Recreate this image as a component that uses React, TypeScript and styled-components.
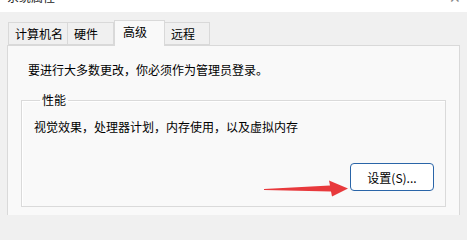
import React from "react";
import styled, { createGlobalStyle } from "styled-components";

const GlobalStyle = createGlobalStyle`
  html, body {
    margin: 0;
    padding: 0;
    background: #f0f0f0;
    font-family: "Noto Sans CJK SC", "Noto Sans", sans-serif;
    font-size: 12px;
    color: #000000;
  }
`;

const Window = styled.div`
  width: 467px;
  height: 215px;
  overflow: hidden;
  background: #f0f0f0;
`;

const TitleBar = styled.div`
  height: 12px;
  background: #ffffff;
  overflow: hidden;
  display: flex;
  justify-content: space-between;
  padding: 0 6px 0 7px;
`;

const TitleText = styled.span`
  font-size: 12px;
  line-height: 16px;
  margin-top: -11px;
  color: #222;
`;

const CloseGlyph = styled.span`
  font-size: 14px;
  line-height: 16px;
  margin-top: -11px;
  color: #888;
`;

const Body = styled.div`
  padding: 0 7px;
`;

const TabRow = styled.div`
  display: flex;
  align-items: flex-end;
  height: 25px;
  margin-top: 8px;
  padding-left: 1px;
`;

const Tab = styled.div<{ $width: number; $active?: boolean }>`
  box-sizing: border-box;
  width: ${({ $width }) => $width}px;
  height: ${({ $active }) => ($active ? 26 : 23)}px;
  margin-bottom: ${({ $active }) => ($active ? -1 : 0)}px;
  padding: ${({ $active }) => ($active ? "3px 0 0 8px" : "3px 0 0 6px")};
  background: ${({ $active }) => ($active ? "#f9f9f9" : "#f0f0f0")};
  border: 1px solid #d9d9d9;
  border-bottom: ${({ $active }) => ($active ? "none" : "1px solid #d9d9d9")};
  border-left: ${({ $active }) => ($active ? "1px solid #d9d9d9" : "none")};
  line-height: 16px;
  position: relative;
  z-index: ${({ $active }) => ($active ? 1 : 0)};

  &:first-child {
    border-left: 1px solid #d9d9d9;
  }
`;

const Panel = styled.div`
  background: #f9f9f9;
  border: 1px solid #d9d9d9;
  height: 200px;
  padding: 16px 13px 0;
`;

const Notice = styled.div`
  line-height: 16px;
  padding-left: 7px;
`;

const GroupBox = styled.fieldset`
  position: relative;
  margin: 14px 0 0;
  padding: 11px 11px 15px 12px;
  border: 1px solid #dadada;
  box-shadow: inset 1px 1px 0 #ffffff;
  display: flex;
  flex-direction: column;
`;

const Legend = styled.legend`
  padding: 0 2px;
  margin-left: 6px;
  line-height: 16px;
`;

const Description = styled.div`
  line-height: 16px;
`;

const ButtonRow = styled.div`
  display: flex;
  justify-content: flex-end;
  margin-top: 28px;
`;

const Button = styled.button`
  box-sizing: border-box;
  width: 84px;
  height: 28px;
  border: 1px solid #2a65a8;
  border-radius: 4px;
  background: #ffffff;
  font-family: inherit;
  font-size: 12px;
  color: #000000;
  padding: 0;
`;

const Arrow = styled.svg`
  position: absolute;
  left: 242px;
  top: 71px;
`;

export default function App() {
  return (
    <Window>
      <GlobalStyle />
      <TitleBar>
        <TitleText>系统属性</TitleText>
        <CloseGlyph>✕</CloseGlyph>
      </TitleBar>
      <Body>
        <TabRow>
          <Tab $width={60}>计算机名</Tab>
          <Tab $width={46}>硬件</Tab>
          <Tab $width={51} $active>
            高级
          </Tab>
          <Tab $width={45}>远程</Tab>
        </TabRow>
        <Panel>
          <Notice>要进行大多数更改，你必须作为管理员登录。</Notice>
          <GroupBox>
            <Legend>性能</Legend>
            <Description>视觉效果，处理器计划，内存使用，以及虚拟内存</Description>
            <ButtonRow>
              <Button>设置(S)...</Button>
            </ButtonRow>
            <Arrow width="90" height="20" viewBox="0 0 90 20">
              <polygon
                points="0,10 66,6.5 65,1.5 84,9.5 68,17.5 67,12.5 0,11"
                fill="#e8393c"
              />
            </Arrow>
          </GroupBox>
        </Panel>
      </Body>
    </Window>
  );
}
